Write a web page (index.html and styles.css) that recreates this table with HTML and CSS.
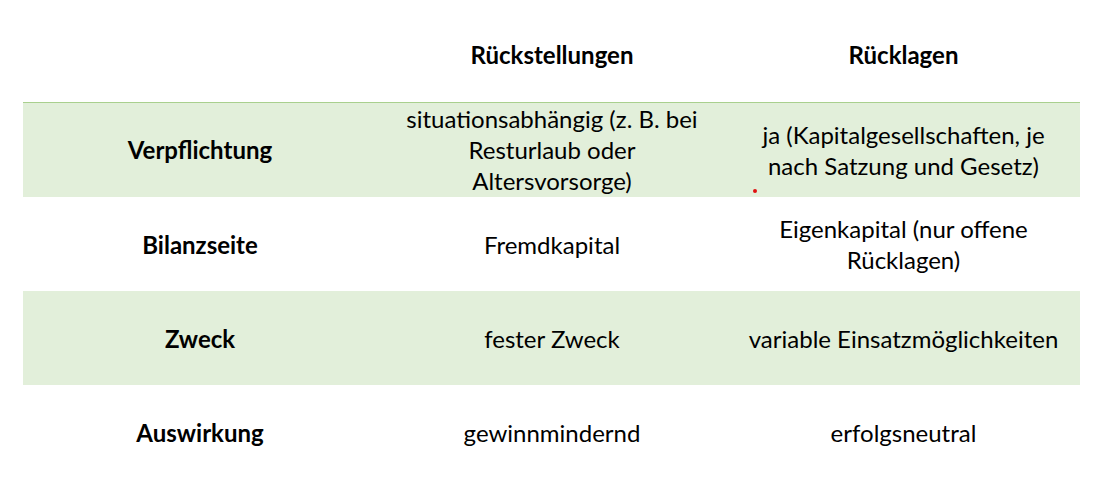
FILE: index.html
```html
<!DOCTYPE html>
<html lang="de">
<head>
<meta charset="utf-8">
<title>Rückstellungen vs. Rücklagen</title>
<link rel="stylesheet" href="styles.css">
</head>
<body>
<table class="cmp">
  <colgroup>
    <col class="c1"><col class="c2"><col class="c3">
  </colgroup>
  <thead>
    <tr class="head">
      <th></th>
      <th>Rückstellungen</th>
      <th>Rücklagen</th>
    </tr>
  </thead>
  <tbody>
    <tr class="green first">
      <th>Verpflichtung</th>
      <td>situationsabhängig (z. B. bei Resturlaub oder Altersvorsorge)</td>
      <td class="dotcell">ja (Kapitalgesellschaften, je nach Satzung und Gesetz)<span class="dot"></span></td>
    </tr>
    <tr>
      <th>Bilanzseite</th>
      <td>Fremdkapital</td>
      <td>Eigenkapital (nur offene Rücklagen)</td>
    </tr>
    <tr class="green">
      <th>Zweck</th>
      <td>fester Zweck</td>
      <td>variable Einsatzmöglichkeiten</td>
    </tr>
    <tr>
      <th>Auswirkung</th>
      <td>gewinnmindernd</td>
      <td>erfolgsneutral</td>
    </tr>
  </tbody>
</table>
</body>
</html>
```
FILE: styles.css
```css
html, body {
  margin: 0;
  padding: 0;
  background: #ffffff;
}
body {
  padding: 8px 0 0 23px;
  font-family: Lato, "Open Sans", "Liberation Sans", sans-serif;
  color: #000;
}
.cmp {
  border-collapse: collapse;
  table-layout: fixed;
  width: 1057px;
  font-size: 24px;
  line-height: 31px;
}
.c1 { width: 354px; }
.c2 { width: 350px; }
.c3 { width: 353px; }
.cmp th, .cmp td {
  padding: 0 14px;
  text-align: center;
  vertical-align: middle;
  font-weight: normal;
}
.cmp th { font-weight: bold; }
.cmp tr { height: 94px; }
.cmp .head { height: 94px; }
.cmp .first { height: 95px; }
.cmp .green { background: #e2efda; }
.cmp .first th, .cmp .first td {
  border-top: 1px solid #a9d08e;
}
.dotcell { position: relative; }
.dot {
  position: absolute;
  left: 26px;
  top: 86px;
  width: 4px;
  height: 4px;
  border-radius: 50%;
  background: #e01010;
}
```
